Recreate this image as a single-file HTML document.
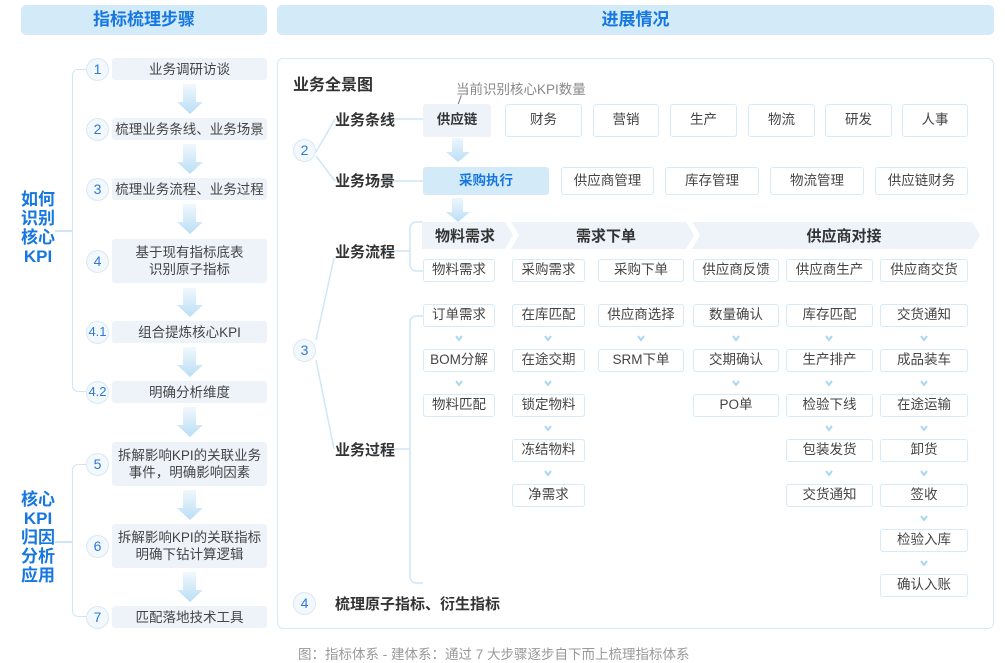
<!DOCTYPE html>
<html><head><meta charset="utf-8">
<style>
*{margin:0;padding:0;box-sizing:border-box}
body{width:1005px;height:662px;background:#fff;position:relative;overflow:hidden;font-family:"Liberation Sans","Noto Sans CJK SC",sans-serif;color:#444}
.a{position:absolute}
.hd{position:absolute;top:5px;height:30px;background:#d3ebf9;border-radius:5px;color:#1677e0;font-weight:bold;font-size:17px;text-align:center;line-height:30px}
.st{position:absolute;left:112px;width:155px;background:#eef3fa;border-radius:3px;font-size:13.5px;color:#444;text-align:center;display:flex;align-items:center;justify-content:center;line-height:17px}
.c{position:absolute;width:23px;height:23px;border:1.5px solid #d6e9f7;border-radius:50%;background:#f3f8fd;color:#2a7bd6;font-size:14px;text-align:center;line-height:20px}
.b{position:absolute;height:23px;border:1.5px solid #d6eaf7;border-radius:3px;background:#fff;font-size:13.5px;color:#444;text-align:center;line-height:20px;white-space:nowrap}
.r{height:33px;line-height:30px}
.s{height:28px;line-height:25px}
.lb{position:absolute;font-weight:bold;font-size:15px;color:#333;white-space:nowrap}
.bl{position:absolute;color:#1677e0;font-weight:bold;font-size:17px;text-align:center;line-height:19px;width:40px}
.ln{position:absolute;background:#cfe6f6}
</style></head><body>
<div class="hd" style="left:21px;width:246px">指标梳理步骤</div>
<div class="hd" style="left:277px;width:717px">进展情况</div>

<div class="a" style="left:72px;top:69px;width:14px;height:323px;border:1.5px solid #cfe6f6;border-right:none;border-radius:6px 0 0 6px"></div>
<div class="ln" style="left:55px;top:230px;width:17px;height:1.5px"></div>
<div class="bl" style="left:18px;top:190px">如何<br>识别<br>核心<br>KPI</div>
<div class="a" style="left:72px;top:464px;width:14px;height:153px;border:1.5px solid #cfe6f6;border-right:none;border-radius:6px 0 0 6px"></div>
<div class="ln" style="left:55px;top:541px;width:17px;height:1.5px"></div>
<div class="bl" style="left:18px;top:490px">核心<br>KPI<br>归因<br>分析<br>应用</div>

<div class="st" style="top:58px;height:22px">业务调研访谈</div>
<div class="st" style="top:118px;height:22px">梳理业务条线、业务场景</div>
<div class="st" style="top:178px;height:22px">梳理业务流程、业务过程</div>
<div class="st" style="top:239px;height:44px">基于现有指标底表<br>识别原子指标</div>
<div class="st" style="top:321px;height:22px">组合提炼核心KPI</div>
<div class="st" style="top:381px;height:22px">明确分析维度</div>
<div class="st" style="top:442px;height:44px">拆解影响KPI的关联业务<br>事件，明确影响因素</div>
<div class="st" style="top:524px;height:44px">拆解影响KPI的关联指标<br>明确下钻计算逻辑</div>
<div class="st" style="top:606px;height:22px">匹配落地技术工具</div>

<div class="c" style="left:86px;top:58px">1</div>
<div class="c" style="left:86px;top:118px">2</div>
<div class="c" style="left:86px;top:178px">3</div>
<div class="c" style="left:86px;top:250px">4</div>
<div class="c" style="left:86px;top:321px;font-size:13px">4.1</div>
<div class="c" style="left:86px;top:381px;font-size:13px">4.2</div>
<div class="c" style="left:86px;top:453px">5</div>
<div class="c" style="left:86px;top:535px">6</div>
<div class="c" style="left:86px;top:606px">7</div>

<svg class="a" style="left:0;top:0" width="270" height="662">
<defs><linearGradient id="g" x1="0" y1="0" x2="0" y2="1"><stop offset="0" stop-color="#f1f8fd"/><stop offset="1" stop-color="#b9def5"/></linearGradient></defs>
<g fill="url(#g)">
<path d="M183 84h13v18h7l-13 12-13-12h6z"/>
<path d="M183 144h13v18h7l-13 12-13-12h6z"/>
<path d="M183 204h13v18h7l-13 12-13-12h6z"/>
<path d="M183 288h13v17h7l-13 12-13-12h6z"/>
<path d="M183 347h13v18h7l-13 12-13-12h6z"/>
<path d="M183 407h13v18h7l-13 12-13-12h6z"/>
<path d="M183 490h13v18h7l-13 12-13-12h6z"/>
<path d="M183 572h13v18h7l-13 12-13-12h6z"/>
</g></svg>

<div class="a" style="left:277px;top:58px;width:717px;height:571px;border:1.5px solid #d6eaf7;border-radius:6px"></div>
<div class="lb" style="left:293px;top:71px;font-size:16px">业务全景图</div>
<div class="a" style="left:456px;top:78px;font-size:13.5px;color:#888">当前识别核心KPI数量</div>
<div class="ln" style="left:459px;top:95px;width:1px;height:11px;background:#777;transform:rotate(20deg)"></div>

<svg class="a" style="left:277px;top:58px" width="717" height="571">
<g stroke="#cfe6f6" stroke-width="1.5" fill="none">
<path d="M39 94 L58 61 M39 98 L58 123"/>
<path d="M100 61 H146 M100 123 H146"/>
<path d="M100 193 H133 M133 171 Q133 164 140 164 H146 M133 171 V206 Q133 213 140 213 H146"/>
<path d="M39 282 L57 200 M39 302 L57 391"/>
<path d="M100 391 H133 M133 265 Q133 258 140 258 H146 M133 265 V518 Q133 525 140 525 H146"/>
</g></svg>
<div class="c" style="left:293px;top:139px">2</div>
<div class="c" style="left:293px;top:339px">3</div>
<div class="c" style="left:293px;top:592px">4</div>

<div class="lb" style="left:335px;top:109px">业务条线</div>
<div class="lb" style="left:335px;top:170px">业务场景</div>
<div class="lb" style="left:335px;top:241px">业务流程</div>
<div class="lb" style="left:335px;top:439px">业务过程</div>
<div class="lb" style="left:335px;top:593px">梳理原子指标、衍生指标</div>

<div class="b r" style="left:423px;top:104px;width:68px;background:#eef3fa;border-color:#eef3fa;font-weight:bold;color:#333">供应链</div>
<div class="b r" style="left:505px;top:104px;width:77px">财务</div>
<div class="b r" style="left:593px;top:104px;width:66px">营销</div>
<div class="b r" style="left:670px;top:104px;width:67px">生产</div>
<div class="b r" style="left:748px;top:104px;width:67px">物流</div>
<div class="b r" style="left:825px;top:104px;width:67px">研发</div>
<div class="b r" style="left:902px;top:104px;width:66px">人事</div>

<div class="b s" style="left:423px;top:167px;width:126px;background:#d3ebf9;border-color:#d3ebf9;color:#1677e0;font-weight:bold">采购执行</div>
<div class="b s" style="left:561px;top:167px;width:93px">供应商管理</div>
<div class="b s" style="left:665px;top:167px;width:94px">库存管理</div>
<div class="b s" style="left:770px;top:167px;width:94px">物流管理</div>
<div class="b s" style="left:875px;top:167px;width:93px">供应链财务</div>

<svg class="a" style="left:440px;top:136px" width="40" height="90">
<defs><linearGradient id="g2" x1="0" y1="0" x2="0" y2="1"><stop offset="0" stop-color="#eef7fd"/><stop offset="1" stop-color="#b9def5"/></linearGradient></defs>
<path fill="url(#g2)" d="M12 2h11v14h7l-12 10-12-10h6z"/>
<path fill="url(#g2)" d="M12 62h11v14h7l-12 10-12-10h6z"/>
</svg>

<svg class="a" style="left:420px;top:221px" width="565" height="30">
<path fill="#eef3fa" d="M2 1H85L93 14L85 28H2Z"/>
<path fill="#eef3fa" d="M91 1H266L274 14L266 28H91L99 14Z"/>
<path fill="#eef3fa" d="M272 1H552L560 14L552 28H272L280 14Z"/>
<text x="45" y="20" font-size="15" font-weight="bold" fill="#333" text-anchor="middle" font-family="Liberation Sans,Noto Sans CJK SC,sans-serif">物料需求</text>
<text x="186" y="20" font-size="15" font-weight="bold" fill="#333" text-anchor="middle" font-family="Liberation Sans,Noto Sans CJK SC,sans-serif">需求下单</text>
<text x="424" y="20" font-size="15" font-weight="bold" fill="#333" text-anchor="middle" font-family="Liberation Sans,Noto Sans CJK SC,sans-serif">供应商对接</text>
</svg>

<div class="b" style="left:423px;top:259px;width:72px">物料需求</div>
<div class="b" style="left:512px;top:259px;width:73px">采购需求</div>
<div class="b" style="left:598px;top:259px;width:86px">采购下单</div>
<div class="b" style="left:693px;top:259px;width:86px">供应商反馈</div>
<div class="b" style="left:786px;top:259px;width:87px">供应商生产</div>
<div class="b" style="left:880px;top:259px;width:88px">供应商交货</div>

<div class="b" style="left:423px;top:304px;width:72px">订单需求</div>
<div class="b" style="left:423px;top:349px;width:72px">BOM分解</div>
<div class="b" style="left:423px;top:394px;width:72px">物料匹配</div>
<div class="b" style="left:512px;top:304px;width:73px">在库匹配</div>
<div class="b" style="left:512px;top:349px;width:73px">在途交期</div>
<div class="b" style="left:512px;top:394px;width:73px">锁定物料</div>
<div class="b" style="left:512px;top:439px;width:73px">冻结物料</div>
<div class="b" style="left:512px;top:484px;width:73px">净需求</div>
<div class="b" style="left:598px;top:304px;width:86px">供应商选择</div>
<div class="b" style="left:598px;top:349px;width:86px">SRM下单</div>
<div class="b" style="left:693px;top:304px;width:86px">数量确认</div>
<div class="b" style="left:693px;top:349px;width:86px">交期确认</div>
<div class="b" style="left:693px;top:394px;width:86px">PO单</div>
<div class="b" style="left:786px;top:304px;width:87px">库存匹配</div>
<div class="b" style="left:786px;top:349px;width:87px">生产排产</div>
<div class="b" style="left:786px;top:394px;width:87px">检验下线</div>
<div class="b" style="left:786px;top:439px;width:87px">包装发货</div>
<div class="b" style="left:786px;top:484px;width:87px">交货通知</div>
<div class="b" style="left:880px;top:304px;width:88px">交货通知</div>
<div class="b" style="left:880px;top:349px;width:88px">成品装车</div>
<div class="b" style="left:880px;top:394px;width:88px">在途运输</div>
<div class="b" style="left:880px;top:439px;width:88px">卸货</div>
<div class="b" style="left:880px;top:484px;width:88px">签收</div>
<div class="b" style="left:880px;top:529px;width:88px">检验入库</div>
<div class="b" style="left:880px;top:574px;width:88px">确认入账</div>

<svg class="a" style="left:0;top:0" width="1005" height="662">
<defs><path id="v" d="M-3 -3 L0 1 L3 -3" stroke="#a9d7f2" stroke-width="2" fill="none"/></defs>
<g>
<use href="#v" x="459" y="339"/><use href="#v" x="459" y="384"/>
<use href="#v" x="548" y="339"/><use href="#v" x="548" y="384"/><use href="#v" x="548" y="429"/><use href="#v" x="548" y="474"/>
<use href="#v" x="641" y="339"/>
<use href="#v" x="736" y="339"/><use href="#v" x="736" y="384"/>
<use href="#v" x="829" y="339"/><use href="#v" x="829" y="384"/><use href="#v" x="829" y="429"/><use href="#v" x="829" y="474"/>
<use href="#v" x="924" y="339"/><use href="#v" x="924" y="384"/><use href="#v" x="924" y="429"/><use href="#v" x="924" y="474"/><use href="#v" x="924" y="519"/><use href="#v" x="924" y="564"/>
</g></svg>

<div class="a" style="left:298px;top:643px;font-size:13.5px;color:#999">图：指标体系 - 建体系：通过 7 大步骤逐步自下而上梳理指标体系</div>
</body></html>
